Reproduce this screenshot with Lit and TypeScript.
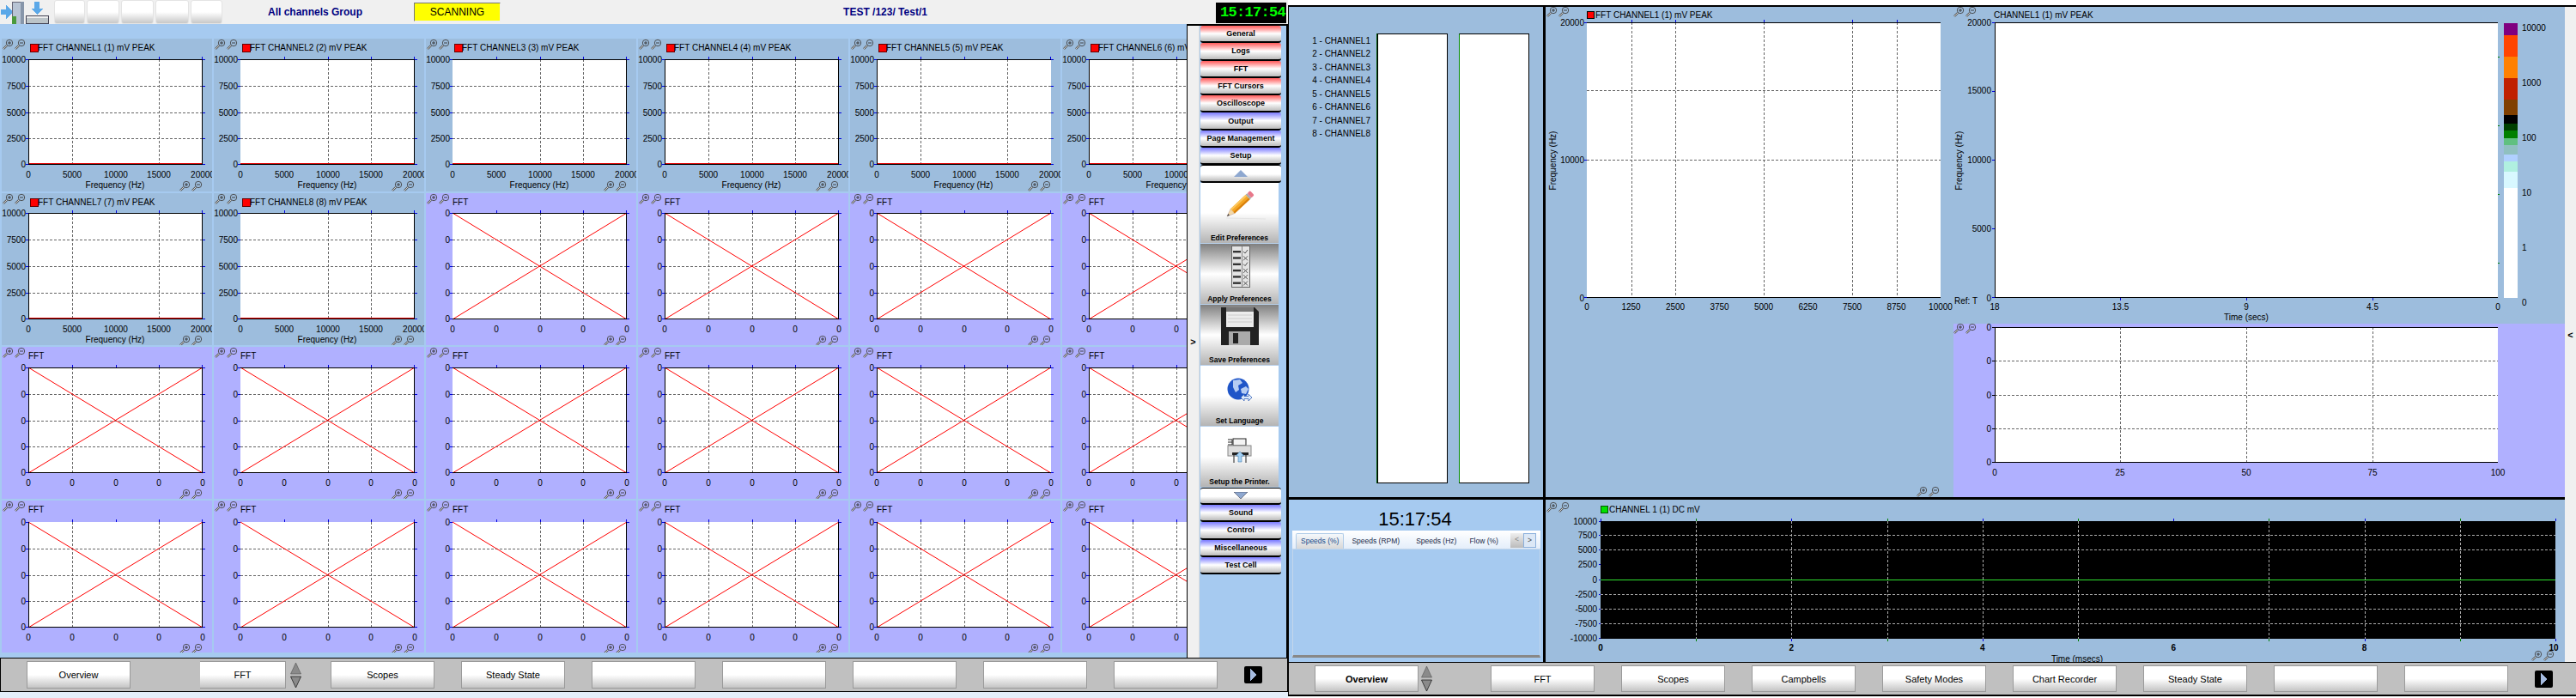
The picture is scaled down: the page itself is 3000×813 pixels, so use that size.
import { css, html, svg, LitElement } from "lit";
import { customElement, property } from "lit/decorators.js";

const svgText = css`
  svg { display: block; shape-rendering: crispEdges; }
  text {
    font-family: "Liberation Sans", Arial, sans-serif;
    font-size: 10px;
    fill: #000;
    dominant-baseline: central;
    shape-rendering: auto;
  }
  .end { text-anchor: end; }
  .mid { text-anchor: middle; }
  .grid { stroke: #666; stroke-width: 1; stroke-dasharray: 3 2; }
  .lgrid { stroke: #aaa; stroke-width: 1; stroke-dasharray: 3 2; }
  .tick { stroke: #0000e0; stroke-width: 1; }
  .gtick { stroke: #008000; stroke-width: 1; }
  .axis { stroke: #000; stroke-width: 1; }
  .cross { stroke: #f00; stroke-width: 1; shape-rendering: auto; }
  .round { shape-rendering: auto; }
`;

// magnifier with a plus or minus, the same one is used on every plot
const mag = (x: number, y: number, sign: string) => svg`
  <g class="round" transform="translate(${x} ${y})">
    <path d="M1 11L5 7" stroke="#555" stroke-width="2.4" />
    <path d="M1 11L5 7" stroke="#ddd" stroke-width=".9" />
    <circle cx="8" cy="4" r="3.7" fill="none" stroke="#444" stroke-width=".9" />
    <path d="M6 4H10" stroke="#333" stroke-width=".9" />
    ${sign === "+" ? svg`<path d="M8 2V6" stroke="#333" stroke-width=".9" />` : ""}
  </g>`;

const magPair = (x: number, y: number) => svg`${mag(x, y, "+")}${mag(x + 14, y, "-")}`;

interface Frame {
  x: number;
  y: number;
  w: number;
  h: number;
  bg?: string;
  noLeft?: boolean;
  noRight?: boolean;
  noTop?: boolean;
}

const frame = (f: Frame) => svg`
  ${f.noTop ? "" : svg`<line class="axis" x1=${f.x} x2=${f.x + f.w} y1=${f.y + 0.5} y2=${f.y + 0.5} />`}
  <line class="axis" x1=${f.x} x2=${f.x + f.w} y1=${f.y + f.h - 0.5} y2=${f.y + f.h - 0.5} />
  ${f.noLeft ? "" : svg`<line class="axis" x1=${f.x + 0.5} x2=${f.x + 0.5} y1=${f.y} y2=${f.y + f.h} />`}
  ${f.noRight ? "" : svg`<line class="axis" x1=${f.x + f.w - 0.5} x2=${f.x + f.w - 0.5} y1=${f.y} y2=${f.y + f.h} />`}
`;

const vLine = (x: number, y: number, h: number, cls = "grid") =>
  svg`<line class=${cls} x1=${x + 0.5} x2=${x + 0.5} y1=${y} y2=${y + h} />`;
const hLine = (x: number, y: number, w: number, cls = "grid") =>
  svg`<line class=${cls} x1=${x} x2=${x + w} y1=${y + 0.5} y2=${y + 0.5} />`;

@customElement("fft-cell")
export class FftCell extends LitElement {
  @property() title = "";
  @property({ type: Boolean }) live = false;
  @property({ type: Number }) row = 0;
  @property({ type: Number }) col = 0;

  render() {
    const { row, col, live } = this;
    const x = 31;
    const w = 203;
    const y = [24, 23, 24, 25][row];
    const h = row === 1 ? 124 : 123;
    const bottom = y + h;
    const yTexts = live ? ["10000", "7500", "5000", "2500", "0"] : ["0", "0", "0", "0", "0"];
    const xTexts = live ? ["0", "5000", "10000", "15000", "20000"] : ["0", "0", "0", "0", "0"];
    // the shot lost some grid lines when it was scaled down
    const missing = col === 0 || (col === 4 && row < 2) ? 2 : col === 1 || col === 2 ? 1 : 0;
    return html`
      <svg width="245" height="100%" class=${live ? "live" : "idle"}>
        <rect x=${x} y=${y} width=${w} height=${h} fill="#fff" />
        ${[1, 2, 3].map((k) =>
          k === missing ? "" : vLine(x + Math.round((w * k) / 4), y, h),
        )}
        ${[1, 2, 3].map((k) => hLine(x, y + Math.round((h * k) / 4), w))}
        ${[0, 1, 2, 3, 4].map((k) => {
          const py = y + Math.round((h * k) / 4) - (k === 4 ? 1 : 0);
          return svg`
            ${hLine(x - 3, py, 3, "tick")}
            ${hLine(x + w, py, 3, "tick")}
            <text class="end" x=${x - 3} y=${py}>${yTexts[k]}</text>`;
        })}
        ${[0, 1, 2, 3, 4].map((k) => {
          const px = x + Math.round((w * k) / 4);
          return svg`
            ${k === 0 ? "" : vLine(k === 4 ? px - 1 : px, y - 3, 3, "tick")}
            <text class="mid" x=${px} y=${bottom + 11}>${xTexts[k]}</text>`;
        })}
        ${live
          ? svg`<rect x=${x} y=${bottom - 2} width=${w} height="1" fill="#e00000" />`
          : svg`
            <line class="cross" x1=${x} y1=${y} x2=${x + w} y2=${bottom} />
            <line class="cross" x1=${x} y1=${bottom} x2=${x + w} y2=${y} />`}
        ${frame({
          x, y, w, h,
          noLeft: col === 1 || col === 2,
          noRight: col === 4,
          noTop: row === 3,
        })}
        ${magPair(1, 1)}
        ${magPair(207, bottom + 19)}
        ${live ? svg`<rect x="33" y="6" width="9" height="9" fill="#f00" stroke="#600" />` : ""}
        <text x=${live ? 42 : 31} y="10">${this.title}</text>
        ${live ? svg`<text class="mid" x="132" y=${bottom + 23}>Frequency (Hz)</text>` : ""}
      </svg>
    `;
  }

  static styles = [
    svgText,
    css`
      :host { display: block; overflow: hidden; }
      .live { background: #9dbddd; }
      .idle { background: #b0b0ff; }
    `,
  ];
}

const pencil = svg`
  <line x1="30" y1="41" x2="76" y2="42" stroke="#e4e4e4" stroke-width="1" />
  <g transform="translate(31 39) rotate(-43)">
    <polygon points="0,0 9,-3.6 9,3.6" fill="#f3d9a8" stroke="#a88" stroke-width=".4" />
    <polygon points="0,0 3,-1.2 3,1.2" fill="#444" />
    <rect x="9" y="-3.6" width="24" height="7.2" fill="#f5a623" />
    <rect x="9" y="-3.6" width="24" height="2.2" fill="#fcc75e" />
    <rect x="9" y="1.4" width="24" height="2.2" fill="#d9820f" />
    <rect x="33" y="-3.6" width="2.5" height="7.2" fill="#aaa" />
    <rect x="35.5" y="-3.6" width="4.5" height="7.2" rx="1.4" fill="#e8788a" />
  </g>`;

const checklist = svg`
  <rect x="36.5" y="2.5" width="21" height="48" fill="#e4e4e4" stroke="#666" />
  <line x1="48.5" x2="48.5" y1="3" y2="50" stroke="#888" />
  ${[0, 1, 2, 3, 4, 5].map((i) => {
    const y = 9 + i * 7.3;
    const ok = i === 0 || i === 2;
    return svg`
      <rect x="38" y=${y - 1} width="9" height="2.4" fill="#333" />
      ${ok
        ? svg`<path d="M50 ${y}l2 2l3 -4" fill="none" stroke="#555" />`
        : svg`<path d="M50 ${y - 2}l5 5M55 ${y - 2}l-5 5" fill="none" stroke="#555" />`}`;
  })}`;

const floppy = svg`
  <path d="M24 3H63L68 8V47H24Z" fill="#222" />
  <rect x="30" y="3" width="32" height="23" fill="#ececec" />
  <rect x="30" y="3" width="32" height="5" fill="#777" />
  <path d="M32 12H60M32 16H60M32 20H60" stroke="#ccc" />
  <rect x="33" y="31" width="25" height="16" fill="#aaa" />
  <rect x="38" y="33" width="6" height="12" fill="#222" />`;

const globe = svg`
  <g class="round">
    <circle cx="44" cy="27" r="12.5" fill="#1f55c8" />
    <path d="M38 17l8 -1l3 4l-5 3l1 5l-4 3l-3 -6zM47 27l6 -3l3 3l-3 6l-5 -1z" fill="#b6cdf3" />
    <path d="M47 37l4 -4v2.500h5v-2.500l4 4l-4 4v-2.500h-5v2.500z" fill="#dbe8fb" stroke="#3a66b8" stroke-width=".8" />
  </g>`;

const printer = svg`
  <path d="M32 15h5v6h-5M32 18h5" fill="none" stroke="#222" />
  <rect x="38" y="14" width="15" height="8" fill="#f4f4f4" stroke="#222" />
  <rect x="32" y="22" width="27" height="12" fill="#ddd" stroke="#888" />
  <rect x="37" y="30" width="19" height="3" fill="#222" />
  <path d="M39 33v9M53 33v9" stroke="#222" />
  <path d="M46 29l5 5h-3v7h-4v-7h-3z" fill="#a6d2f4" stroke="#4a7fb0" stroke-width=".6" />`;

const SIDE_TOP = [
  ["General", "red"],
  ["Logs", "red"],
  ["FFT", "red"],
  ["FFT Cursors", "red"],
  ["Oscilloscope", "red"],
  ["Output", "blue"],
  ["Page Management", "blue"],
  ["Setup", "blue"],
];
const SIDE_BOTTOM = ["Sound", "Control", "Miscellaneous", "Test Cell"];
const SIDE_BIG = [
  ["Edit Preferences", "white", pencil],
  ["Apply Preferences", "gray", checklist],
  ["Save Preferences", "gray", floppy],
  ["Set Language", "white", globe],
  ["Setup the Printer.", "white", printer],
] as const;

@customElement("side-panel")
export class SidePanel extends LitElement {
  render() {
    return html`
      <div class="strip">&gt;</div>
      <div class="list">
        ${SIDE_TOP.map(([t, c]) => html`<div class="small ${c}">${t}</div>`)}
        <div class="small plain">
          <svg width="16" height="8"><polygon points="8,0 16,8 0,8" fill="#8ea8d0" /></svg>
        </div>
        ${SIDE_BIG.map(
          ([t, c, icon]) => html`
            <div class="big ${c}">
              <svg width="91" height="56">${icon}</svg>
              <span>${t}</span>
            </div>
          `,
        )}
        <div class="small plain">
          <svg width="16" height="8"><polygon points="0,0 16,0 8,8" fill="#8ea8d0" stroke="#223" stroke-width=".5" /></svg>
        </div>
        ${SIDE_BOTTOM.map((t) => html`<div class="small blue">${t}</div>`)}
      </div>
    `;
  }

  static styles = css`
    :host {
      display: flex;
      width: 118px;
      box-sizing: border-box;
      border: solid #000;
      border-width: 2px 2px 0 1px;
      background: #a6caf0;
      font-family: "Liberation Sans", Arial, sans-serif;
    }
    .strip {
      width: 14px;
      background: #f0f0f0;
      border-right: 1px solid #ddd;
      box-sizing: border-box;
      display: flex;
      align-items: center;
      justify-content: center;
      font: bold 11px "Liberation Sans", sans-serif;
    }
    .list {
      margin-left: 1px;
      display: flex;
      flex-direction: column;
    }
    .small {
      width: 94px;
      height: 20.300px;
      box-sizing: border-box;
      border-bottom: 2px solid #000;
      border-radius: 3px;
      display: flex;
      align-items: center;
      justify-content: center;
      font-size: 9px;
      font-weight: bold;
    }
    .red { background: linear-gradient(#ff5a5a, #fff 50%, #bbb); }
    .blue { background: linear-gradient(#7a7aff, #fff 50%, #bbb); }
    .plain {
      background: linear-gradient(#fff, #fff 55%, #bbb);
      border-top: 1px solid #000;
    }
    .big {
      width: 91px;
      height: 71px;
      box-sizing: border-box;
      display: flex;
      flex-direction: column;
      align-items: center;
      font-size: 8.500px;
      font-weight: bold;
      border-bottom: 1px solid #b8d0ea;
    }
    .big svg { display: block; flex: none; shape-rendering: auto; }
    .big span { margin-top: 3px; }
    .white { background: linear-gradient(#fff, #fff 50%, #b4b4b4); }
    .gray { background: linear-gradient(#808080, #fff 50%, #b4b4b4); }
  `;
}

@customElement("nav-arrows")
export class NavArrows extends LitElement {
  render() {
    return html`
      <svg width="13" height="31">
        <polygon points="6.5,1 12.5,14 0.500,14" fill="#8a8a8a" stroke="#444" stroke-width=".5" />
        <polygon points="0.500,17 12.5,17 6.5,30" fill="#8a8a8a" stroke="#222" stroke-width=".8" />
      </svg>
    `;
  }
  static styles = css`
    :host { display: block; flex: none; }
    svg { display: block; }
  `;
}

const navStyles = css`
  .nav {
    display: flex;
    align-items: center;
    gap: 31px;
    box-sizing: border-box;
    background: #c0c0c0;
    border: solid #000;
    padding-left: 30px;
    font: 11px "Liberation Sans", Arial, sans-serif;
  }
  .btn {
    width: 121px;
    height: 31px;
    flex: none;
    box-sizing: border-box;
    border: 1px solid #9a9a9a;
    background: linear-gradient(#fff, #fff 50%, #c4c4c4);
    display: flex;
    align-items: center;
    justify-content: center;
  }
  .narrow { width: 100px; border-left: 0; }
  .bold { font-weight: bold; }
  .pair { display: flex; align-items: center; gap: 5px; width: 121px; flex: none; }
  .play {
    width: 21px;
    height: 20px;
    flex: none;
    background: #000;
    border-radius: 2px;
    display: flex;
    align-items: center;
    justify-content: center;
  }
`;

const playIcon = html`
  <div class="play"><svg width="9" height="14"><polygon points="1,0 8,7 1,14" fill="#a6bce0" /></svg></div>
`;

const titles = [
  "FFT CHANNEL1 (1) mV PEAK", "FFT CHANNEL2 (2) mV PEAK", "FFT CHANNEL3 (3) mV PEAK",
  "FFT CHANNEL4 (4) mV PEAK", "FFT CHANNEL5 (5) mV PEAK", "FFT CHANNEL6 (6) mV PEAK",
  "FFT CHANNEL7 (7) mV PEAK", "FFT CHANNEL8 (8) mV PEAK",
];

const colourBar: [string, number, number][] = [
  ["#800080", 19, 14], ["#ff4500", 33, 25], ["#ff8000", 58, 25], ["#c02000", 83, 25],
  ["#804000", 108, 18], ["#000000", 126, 10], ["#004000", 136, 8], ["#008000", 144, 9],
  ["#60c080", 153, 8], ["#90c0c0", 161, 11], ["#b0d0ff", 172, 8], ["#b0f0e0", 180, 12],
  ["#d8f8ff", 192, 19], ["#ffffff", 211, 128],
];

@customElement("app-root")
export class AppRoot extends LitElement {
  spectrum() {
    const x = 48, y = 18, w = 412, h = 321;
    const labels = ["0", "1250", "2500", "3750", "5000", "6250", "7500", "8750", "10000"];
    return svg`
      <svg width="475" height="571">
        <rect x=${x} y=${y} width=${w} height=${h} fill="#fff" />
        ${[1, 2, 4, 6, 7].map((k) => vLine(x + Math.round(51.5 * k), y, h))}
        ${[79, 160].map((d) => hLine(x, y + d, w))}
        ${[1, 2, 4, 6, 7].map((k) => vLine(x + Math.round(51.5 * k), y - 3, 3, "tick"))}
        ${[0, 160, 320].map((d) => hLine(x - 3, y + d, 3, "tick"))}
        ${hLine(x, y + 0, w, "axis")}
        ${hLine(x, y + h - 1, w, "axis")}
        ${labels.map((t, k) => svg`<text class="mid" x=${x + 51.5 * k} y="349">${t}</text>`)}
        ${[["20000", 18], ["10000", 178], ["0", 339]].map(
          ([t, py]) => svg`<text class="end" x="45" y=${py}>${t}</text>`,
        )}
        <text class="mid" transform="translate(8 179) rotate(-90)">Frequency (Hz)</text>
        <rect x="48.500" y="5.500" width="8" height="8" fill="#f00" stroke="#000" />
        <text x="58" y="9">FFT CHANNEL1 (1) mV PEAK</text>
        ${magPair(1, 0)}
        ${magPair(432, 559)}
      </svg>
    `;
  }

  spectrogram() {
    const x = 48, y = 18, w = 586, h = 321;
    return svg`
      <svg width="712" height="369">
        <rect x=${x} y=${y} width=${w} height=${h} fill="#fff" />
        ${hLine(x, y, w, "axis")}
        ${hLine(x, y + h - 1, w, "axis")}
        ${vLine(x, y, h, "axis")}
        ${[0, 80, 160, 240, 320].map((d) => hLine(x - 3, y + d, 3, "tick"))}
        ${[40, 120, 200, 280].map((d) => hLine(x + w, y + d, 2, "gtick"))}
        ${[146, 293, 440].map((d) => vLine(x + d, y + h, 3, "tick"))}
        ${[["20000", 18], ["15000", 97], ["10000", 178], ["5000", 258], ["0", 339]].map(
          ([t, py]) => svg`<text class="end" x="44" y=${py}>${t}</text>`,
        )}
        ${[["18", 0], ["13.5", 146.500], ["9", 293], ["4.5", 440], ["0", 586]].map(
          ([t, d]) => svg`<text class="mid" x=${x + (d as number)} y="349">${t}</text>`,
        )}
        <text class="mid" x="341" y="361">Time (secs)</text>
        <text x="1" y="342">Ref: T</text>
        <text class="mid" transform="translate(6 179) rotate(-90)">Frequency (Hz)</text>
        <text x="47" y="9">CHANNEL1 (1) mV PEAK</text>
        ${colourBar.map(
          ([c, top, ht]) => svg`<rect x="641" y=${top} width="16" height=${ht} fill=${c} />`,
        )}
        ${[["10000", 24], ["1000", 88], ["100", 152], ["10", 216], ["1", 280], ["0", 344]].map(
          ([t, py]) => svg`<text x="662" y=${py}>${t}</text>`,
        )}
        ${magPair(0, 0)}
      </svg>
    `;
  }

  profile() {
    const x = 48, y = 4, w = 586, h = 158;
    return svg`
      <svg width="712" height="202">
        <rect x=${x} y=${y} width=${w} height=${h} fill="#fff" />
        ${[146, 293, 440].map((d) => vLine(x + d, y, h))}
        ${[39, 79, 118].map((d) => hLine(x, y + d, w))}
        ${hLine(x, y, w, "axis")}
        ${hLine(x, y + h - 1, w, "axis")}
        ${vLine(x, y, h, "axis")}
        ${[0, 39, 79, 118, 157].map(
          (d) => svg`${hLine(x - 3, y + d, 3, "axis")}<text class="end" x="44" y=${y + d}>0</text>`,
        )}
        ${[["0", 0], ["25", 146], ["50", 293], ["75", 440], ["100", 586]].map(
          ([t, d]) => svg`<text class="mid" x=${x + (d as number)} y="173">${t}</text>`,
        )}
        ${magPair(0, 0)}
      </svg>
    `;
  }

  scope() {
    const x = 64, y = 25, w = 1112, h = 137;
    const rows: [string, number][] = [
      ["10000", 0], ["7500", 16], ["5000", 33], ["2500", 50], ["0", 68],
      ["-2500", 85], ["-5000", 102], ["-7500", 119], ["-10000", 136],
    ];
    return svg`
      <svg width="1187" height="189">
        <rect x=${x} y=${y} width=${w} height=${h} fill="#000" />
        ${[16, 33, 85, 102, 119].map((d) => hLine(x, y + d, w, "lgrid"))}
        ${[1, 2, 3, 4, 5, 7, 8, 9].map((k) => vLine(x + Math.round(111.2 * k), y, h, "lgrid"))}
        <rect x=${x} y=${y + 68} width=${w} height="1" fill="#30e030" />
        ${[0, 2, 4, 6, 8, 10].map((k) => vLine(x + Math.round(111.2 * k), y - 3, 3, "tick"))}
        ${[1, 3, 5, 7, 9].map((k) => vLine(x + Math.round(111.2 * k), y - 3, 3, "gtick"))}
        ${[2, 4, 8, 10].map((k) => vLine(x + Math.round(111.2 * k), y + h, 3, "tick"))}
        ${[1, 3, 5, 7, 9].map((k) => vLine(x + Math.round(111.2 * k), y + h, 3, "gtick"))}
        ${rows.map(
          ([t, d]) => svg`${hLine(x - 2, y + d, 2, "tick")}<text class="end" x="60" y=${y + d}>${t}</text>`,
        )}
        ${[0, 2, 4, 6, 8, 10].map(
          (k) => svg`<text class="mid strong" x=${x + 111.2 * k - (k === 10 ? 2 : 0)} y="172">${k}</text>`,
        )}
        <text class="mid" x="619" y="185">Time (msecs)</text>
        <rect x="64.500" y="7.500" width="8" height="8" fill="#00e000" stroke="#050" />
        <text x="74" y="11">CHANNEL 1 (1) DC mV</text>
        ${magPair(1, 3)}
        ${magPair(1148, 176)}
      </svg>
    `;
  }

  render() {
    const cells = Array.from({ length: 24 }, (_, i) => ({
      row: Math.floor(i / 6),
      col: i % 6,
      live: i < 8,
      title: i < 8 ? titles[i] : "FFT",
    }));
    const rightNav = ["FFT", "Scopes", "Campbells", "Safety Modes", "Chart Recorder", "Steady State", "", ""];
    const leftNav = ["Scopes", "Steady State", "", "", "", "", ""];
    const channels = [1, 2, 3, 4, 5, 6, 7, 8];
    return html`
      <div class="window left">
        <div class="topbar">
          <svg class="logo" width="58" height="28">
            <polygon points="1,16 7,16 7,11 15,19 7,27 7,22 1,22" fill="#5ba8e8" transform="translate(0 -5)" />
            <rect x="14" y="2" width="10" height="26" fill="#b8c4d4" stroke="#667" />
            <rect x="14" y="19" width="5" height="9" fill="#4a9a3c" />
            <rect x="24" y="2" width="4" height="26" fill="#8796aa" />
            <polygon points="40,2 46,2 46,10 50,10 43,17 36,10 40,10" fill="#5ba8e8" />
            <rect x="30.500" y="18.500" width="26" height="9" fill="#bcc4c8" stroke="#445" />
            <rect x="31" y="19" width="25" height="2" fill="#eee" />
          </svg>
          <div class="blanks">
            ${[36, 38, 38, 39, 37].map((w) => html`<div class="blank" style="width:${w}px"></div>`)}
          </div>
          <div class="group">All channels Group</div>
          <div class="scan">SCANNING</div>
          <div class="test">TEST /123/ Test/1</div>
          <div class="clock">15:17:54</div>
        </div>
        <div class="body">
          <div class="charts">
            ${cells.map(
              (c) => html`<fft-cell .row=${c.row} .col=${c.col} ?live=${c.live} .title=${c.title}></fft-cell>`,
            )}
          </div>
          <side-panel></side-panel>
        </div>
        <div class="nav lnav">
          <div class="btn first">Overview</div>
          <div class="pair">
            <div class="btn narrow">FFT</div>
            <nav-arrows></nav-arrows>
          </div>
          ${leftNav.map((t) => html`<div class="btn">${t}</div>`)}
          ${playIcon}
        </div>
      </div>

      <div class="window right">
        <div class="monitor">
          <div class="cols">
            <div class="bars">
              <div class="names">
                ${channels.map((n) => html`<div>${n} - CHANNEL${n}</div>`)}
              </div>
              <div class="bar short"></div>
              <div class="bar full"></div>
            </div>
            <div class="plots">
              <div class="wide">${this.spectrum()}</div>
              <div class="stack">
                <div class="sg">${this.spectrogram()}</div>
                <div class="pf">${this.profile()}</div>
              </div>
            </div>
            <div class="speeds">
              <div class="time">15:17:54</div>
              <div class="tabs">
                <div class="tab active">Speeds (%)</div>
                <div class="tab">Speeds (RPM)</div>
                <div class="tab">Speeds (Hz)</div>
                <div class="tab">Flow (%)</div>
                <div class="pager"><span>&lt;</span><span class="on">&gt;</span></div>
              </div>
              <div class="tabbody"></div>
            </div>
            <div class="scope">${this.scope()}</div>
          </div>
          <div class="rstrip">&lt;</div>
        </div>
        <div class="nav rnav">
          <div class="btn bold">Overview</div>
          <nav-arrows class="after"></nav-arrows>
          ${rightNav.map((t) => html`<div class="btn">${t}</div>`)}
          ${playIcon}
        </div>
      </div>
    `;
  }

  static styles = [
    navStyles,
    svgText,
    css`
      :host {
        display: flex;
        width: 3000px;
        height: 813px;
        overflow: hidden;
        font-family: "Liberation Sans", Arial, sans-serif;
        font-size: 10px;
        background: #e4eefa;
      }
      .window { width: 1500px; height: 813px; flex: none; }

      .topbar {
        height: 28px;
        background: #f0f0f0;
        display: flex;
        align-items: center;
        position: relative;
      }
      .logo { flex: none; margin-right: 5px; }
      .blanks { display: flex; gap: 2px; align-self: flex-start; }
      .blank {
        height: 28px;
        box-sizing: border-box;
        border: 1px solid #e4e4e4;
        border-radius: 3px;
        background: linear-gradient(#fff, #fff 50%, #c8c8c8);
      }
      .group {
        width: 110px;
        margin-left: 53px;
        text-align: center;
        font-size: 12px;
        font-weight: bold;
        color: #000080;
      }
      .scan {
        margin-left: 60px;
        width: 101px;
        height: 22px;
        box-sizing: border-box;
        background: #ff0;
        border: 1px solid #777;
        border-color: #777 #eee #eee #777;
        text-align: center;
        font-size: 12px;
        line-height: 20px;
      }
      .test {
        width: 120px;
        margin-left: 388px;
        text-align: center;
        font-size: 12px;
        font-weight: bold;
        color: #000080;
      }
      .clock {
        position: absolute;
        left: 1416px;
        top: 3px;
        width: 82px;
        height: 24px;
        background: #000;
        color: #0f0;
        font: bold 17px/24px "Liberation Mono", monospace;
        letter-spacing: -0.7px;
        text-align: right;
        box-sizing: border-box;
        padding-right: 1px;
      }

      .body {
        display: flex;
        height: 738px;
        background: #a6caf0;
      }
      .charts {
        width: 1382px;
        flex: none;
        box-sizing: border-box;
        overflow: hidden;
        padding: 17px 0 0 2px;
        display: grid;
        grid-template-columns: repeat(6, 245px);
        grid-template-rows: 178px 177px 177px 177px;
        gap: 2px;
      }

      .lnav { height: 40px; border-width: 1px; }
      .lnav .first { margin-right: 50px; }
      .lnav .btn { height: 32px; }

      .right { padding-top: 6px; box-sizing: border-box; background: #fff; }
      .monitor { display: flex; height: 765px; border-top: 2px solid #000; box-sizing: border-box; }
      .cols {
        display: grid;
        grid-template-columns: 296px 1187px;
        grid-template-rows: 571px 189px;
        gap: 3px;
        background: #000;
        padding-left: 1px;
      }
      .rstrip {
        width: 13px;
        background: #f0f0f0;
        display: flex;
        align-items: center;
        justify-content: center;
        font-weight: bold;
        font-size: 11px;
      }
      .bars {
        background: #9dbddd;
        display: flex;
        align-items: flex-start;
        padding-top: 31px;
      }
      .names {
        width: 95px;
        flex: none;
        padding-top: 0.5px;
        text-align: right;
        line-height: 15.500px;
      }
      .bar {
        height: 524px;
        width: 82px;
        box-sizing: border-box;
        background: #fff;
        border: 1px solid #000;
        margin-left: 8px;
      }
      .bar.short { box-shadow: -1px 0 0 #050; }
      .bar.full { margin-left: 13px; border-left-color: #080; }

      .plots { display: flex; background: #9dbddd; }
      .wide { width: 475px; flex: none; }
      .stack { width: 712px; flex: none; }
      .sg { height: 369px; }
      .pf { height: 202px; background: #b0b0ff; }

      .speeds { background: #a6caf0; }
      .time {
        height: 36px;
        box-sizing: border-box;
        padding-top: 10px;
        padding-right: 2px;
        line-height: 26px;
        text-align: center;
        font-size: 22px;
      }
      .tabs {
        height: 21px;
        margin: 0 3px 0 4px;
        background: linear-gradient(#fff, #e4eefa);
        display: flex;
        align-items: flex-end;
        font-size: 8.500px;
        color: #1a2a48;
      }
      .tab {
        height: 17px;
        line-height: 17px;
        padding: 0 5px;
        margin-right: 5px;
      }
      .tab:nth-child(2) { margin-left: -1px; margin-right: 9px; }
      .tab:nth-child(3) { margin-right: 5px; }
      .tab.active {
        margin-left: 4px;
        color: #154a8a;
        border: 1px solid #b0cce8;
        border-bottom: 0;
        border-radius: 2px 2px 0 0;
        background: linear-gradient(#f4f8fc, #d8d8d8);
      }
      .pager { margin-left: auto; margin-right: 5px; margin-bottom: 1px; display: flex; }
      .pager span {
        width: 15px;
        height: 17px;
        box-sizing: border-box;
        text-align: center;
        line-height: 15px;
        background: linear-gradient(#eee, #bbb);
        color: #888;
      }
      .pager .on { border: 1px solid #8cb0dc; background: #dce8f6; color: #444; }
      .tabbody {
        height: 127px;
        margin: 0 3px 0 4px;
        box-sizing: border-box;
        border: 1px solid #c4d6ea;
        border-bottom: 3px solid #888;
        background: #a6caf0;
      }
      .scope { background: #9dbddd; }
      .strong { font-weight: bold; }

      .rnav {
        height: 40px;
        border-width: 1px 0 2px 1px;
        padding-left: 30px;
      }
      .rnav nav-arrows.after { margin: 0 3px 0 -28px; }
      .rnav nav-arrows.after + .btn { margin-left: 34px; }
    `,
  ];
}
